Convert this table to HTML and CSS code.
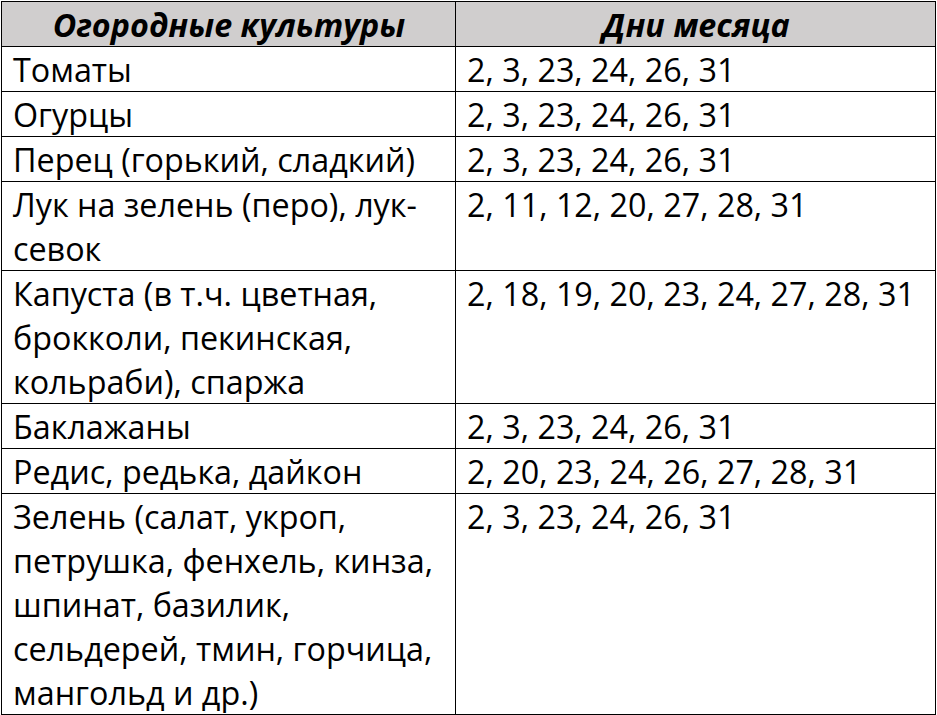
FILE: index.html
```html
<!DOCTYPE html>
<html lang="ru">
<head>
<meta charset="utf-8">
<title>Огородные культуры</title>
<link rel="stylesheet" href="styles.css">
</head>
<body>
<table class="calendar">
  <colgroup>
    <col class="col-crop">
    <col class="col-days">
  </colgroup>
  <thead>
    <tr>
      <th><div class="txt">Огородные культуры</div></th>
      <th><div class="txt">Дни месяца</div></th>
    </tr>
  </thead>
  <tbody>
    <tr><td><div class="txt">Томаты</div></td><td><div class="txt">2, 3, 23, 24, 26, 31</div></td></tr>
    <tr><td><div class="txt">Огурцы</div></td><td><div class="txt">2, 3, 23, 24, 26, 31</div></td></tr>
    <tr><td><div class="txt">Перец (горький, сладкий)</div></td><td><div class="txt">2, 3, 23, 24, 26, 31</div></td></tr>
    <tr><td><div class="txt">Лук на зелень (перо), лук-<br>севок</div></td><td><div class="txt">2, 11, 12, 20, 27, 28, 31</div></td></tr>
    <tr><td><div class="txt">Капуста (в т.ч. цветная,<br>брокколи, пекинская,<br>кольраби), спаржа</div></td><td><div class="txt">2, 18, 19, 20, 23, 24, 27, 28, 31</div></td></tr>
    <tr><td><div class="txt">Баклажаны</div></td><td><div class="txt">2, 3, 23, 24, 26, 31</div></td></tr>
    <tr><td><div class="txt">Редис, редька, дайкон</div></td><td><div class="txt">2, 20, 23, 24, 26, 27, 28, 31</div></td></tr>
    <tr><td><div class="txt">Зелень (салат, укроп,<br>петрушка, фенхель, кинза,<br>шпинат, базилик,<br>сельдерей, тмин, горчица,<br>мангольд и др.)</div></td><td><div class="txt">2, 3, 23, 24, 26, 31</div></td></tr>
  </tbody>
</table>
</body>
</html>
```

FILE: styles.css
```css
html, body {
  margin: 0;
  padding: 0;
  background: #ffffff;
}

body {
  font-family: "Open Sans", "Noto Sans", sans-serif;
  color: #000000;
}

.calendar {
  border-collapse: collapse;
  table-layout: fixed;
  width: 934px;
  margin: 1px 0 0 1px;
  font-size: 32.3px;
  line-height: 44px;
}

.col-crop {
  width: 454px;
}

.col-days {
  width: 480px;
}

.calendar th,
.calendar td {
  border: 1px solid #000000;
  padding: 0 10px 0 11px;
  vertical-align: top;
  text-align: left;
  white-space: nowrap;
}

.calendar th {
  background: #d0cece;
  text-align: center;
  font-weight: 700;
  font-style: italic;
}

.txt {
  margin: 0;
}
```
